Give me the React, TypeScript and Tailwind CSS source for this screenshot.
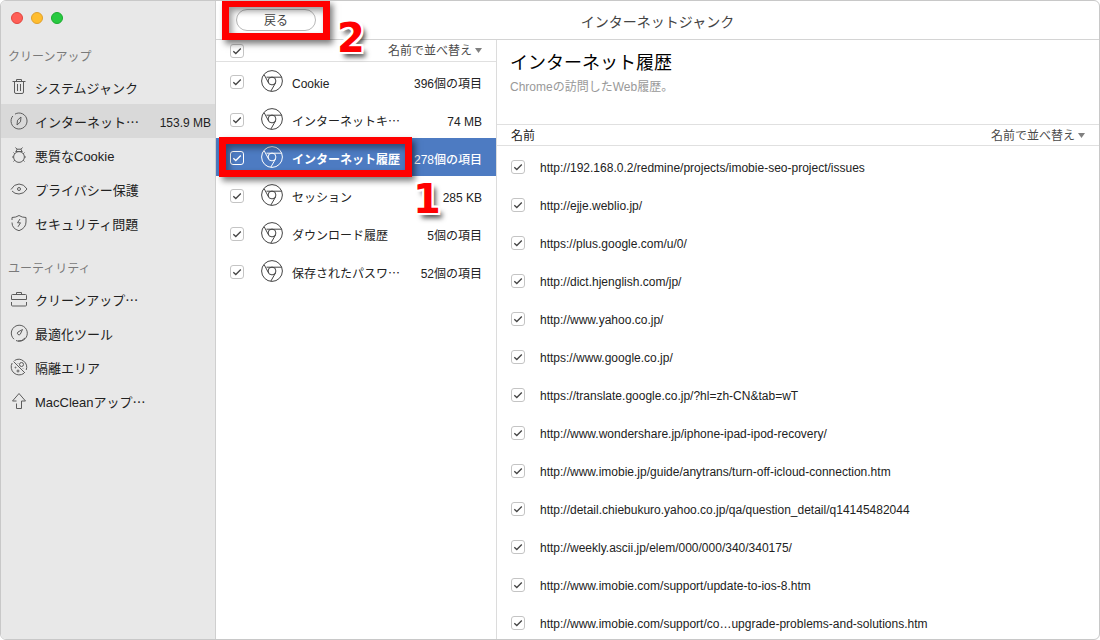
import React from "react";

type SidebarItem = { label: string; size?: string; icon: React.ReactNode; active?: boolean };

const cleanup: SidebarItem[] = [
  {
    label: "システムジャンク",
    icon: (
      <>
        <path d="M2.5 3.5h13M6.5 3.5v-2h5v2M4.5 3.5v10.5q0 1.5 1.500 1.500h6q1.500 0 1.500-1.500V3.5" />
        <path d="M7.5 6v7M10.5 6v7" />
      </>
    ),
  },
  {
    label: "インターネット…",
    size: "153.9 MB",
    active: true,
    icon: (
      <>
        <path d="M5 2.100A8 8 0 1 1 2.800 4" />
        <path d="M11 5L7.5 8.2L7 13L10.5 9.8Z" />
      </>
    ),
  },
  {
    label: "悪質なCookie",
    icon: (
      <>
        <path d="M5.500 1.500L7 3.200h4L12.500 1.500M7 3.200L5.800 6M11 3.200L12.200 6M5.800 5.500h6.400" />
        <path d="M3.500 6.500l1.300 1.300M14.500 6.500l-1.300 1.300M2 11h1.500M16 11h-1.500M3.500 15.500l1.300-1.300M14.500 15.500l-1.300-1.300" />
        <circle cx="9" cy="11" r="5.400" />
      </>
    ),
  },
  {
    label: "プライバシー保護",
    icon: (
      <>
        <path d="M1 9.500Q4 4 9 4q5 0 8 5M17 9Q14 14 9 14q-4.500 0-7-3" />
        <circle cx="9" cy="9" r="1.500" />
      </>
    ),
  },
  {
    label: "セキュリティ問題",
    icon: (
      <>
        <path d="M2 6V3.500Q6 3.500 9 1.500Q12 3.500 16 3.500V8q0 6-7 8.700Q2 14.800 2 8.500" />
        <path d="M10 5L7.500 8.800h3L8 12.800" />
      </>
    ),
  },
];

const utilities: SidebarItem[] = [
  {
    label: "クリーンアップ…",
    icon: (
      <path d="M6.500 4.500v-2h5v2M1.500 9.500v-4q0-1 1-1h13q1 0 1 1v4M1.500 9.500h15M1.500 12v3q0 1 1 1h13q1 0 1-1v-3" />
    ),
  },
  {
    label: "最適化ツール",
    icon: (
      <>
        <path d="M4 15.200A8 8 0 1 1 6 16.500M8 17a8 8 0 0 0 7-3" />
        <path d="M12.500 5.500L10.300 10.200A1.600 1.600 0 1 1 8 8Z" />
      </>
    ),
  },
  {
    label: "隔離エリア",
    icon: (
      <>
        <path d="M4.500 2.500A8 8 0 0 1 16.200 12M14 15.300A8 8 0 0 1 2.200 5M3.500 3.500l11.500 11.500" />
        <circle cx="11.500" cy="6.500" r="2" />
        <circle cx="5.500" cy="9.500" r=".5" />
        <circle cx="8" cy="13" r="1" />
        <path d="M8 5.500v.5M13 10v.5" />
      </>
    ),
  },
  {
    label: "MacCleanアップ…",
    icon: <path d="M6.500 9H2.500L9 1.500L15.500 9H11.500V16.500H6.500V11.500" />,
  },
];

const items = [
  { name: "Cookie", amount: "396個の項目" },
  { name: "インターネットキ…", amount: "74 MB" },
  { name: "インターネット履歴", amount: "278個の項目", selected: true },
  { name: "セッション", amount: "285 KB" },
  { name: "ダウンロード履歴", amount: "5個の項目" },
  { name: "保存されたパスワ…", amount: "52個の項目" },
];

const urls = [
  "http://192.168.0.2/redmine/projects/imobie-seo-project/issues",
  "http://ejje.weblio.jp/",
  "https://plus.google.com/u/0/",
  "http://dict.hjenglish.com/jp/",
  "http://www.yahoo.co.jp/",
  "https://www.google.co.jp/",
  "https://translate.google.co.jp/?hl=zh-CN&tab=wT",
  "http://www.wondershare.jp/iphone-ipad-ipod-recovery/",
  "http://www.imobie.jp/guide/anytrans/turn-off-icloud-connection.htm",
  "http://detail.chiebukuro.yahoo.co.jp/qa/question_detail/q14145482044",
  "http://weekly.ascii.jp/elem/000/000/340/340175/",
  "http://www.imobie.com/support/update-to-ios-8.htm",
  "http://www.imobie.com/support/co…upgrade-problems-and-solutions.htm",
];

// The ellipsis is set in the Japanese face so that it sits at mid height
const Label: React.FC<{ text: string }> = ({ text }) =>
  text.endsWith("…") ? (
    <>
      {text.slice(0, -1)}
      <span lang="ja" className="font-['Noto_Sans_CJK_JP',sans-serif] leading-none">…</span>
    </>
  ) : (
    <>{text}</>
  );

const Checkbox: React.FC<{ id: string; label?: string; light?: boolean }> = ({ id, label, light }) => (
  <span className="grid size-[14px] shrink-0">
    <input
      id={id}
      type="checkbox"
      defaultChecked
      aria-label={label}
      className={
        "peer col-start-1 row-start-1 size-[14px] appearance-none rounded-[3px] border " +
        (light ? "border-white" : "border-[#c4c4c4] bg-white")
      }
    />
    <svg
      viewBox="0 0 14 14"
      fill="none"
      stroke="currentColor"
      strokeWidth="1.3"
      className={
        "pointer-events-none invisible col-start-1 row-start-1 size-[14px] peer-checked:visible " +
        (light ? "text-white" : "text-[#444]")
      }
    >
      <path d="M3.300 7.200L5.800 9.500L10.800 4.500" />
    </svg>
  </span>
);

const SortSelect: React.FC<{ id: string }> = ({ id }) => (
  <label htmlFor={id} className="flex items-center gap-[3px] text-[#4a4a4a]">
    <select id={id} aria-label="並べ替え" className="w-[84px] appearance-none bg-transparent pt-px text-xs font-normal">
      <option>名前で並べ替え</option>
    </select>
    <svg viewBox="0 0 7 5" className="h-[5px] w-[7px] fill-[#808080]">
      <path d="M0 0h7L3.500 5Z" />
    </svg>
  </label>
);

const ChromeIcon: React.FC<{ light?: boolean }> = ({ light }) => (
  <svg
    viewBox="0 0 22 22"
    fill="none"
    stroke="currentColor"
    className={"size-[22px] shrink-0 " + (light ? "text-white" : "text-[#444]")}
  >
    <circle cx="11" cy="11" r="10.400" />
    <circle cx="11" cy="11" r="3.900" />
    <path d="M5.500 7.200H20.500M3.200 4.800L7.600 13M14.600 12.800L9.800 21.200" />
  </svg>
);

const SidebarGroup: React.FC<{ title: string; entries: SidebarItem[] }> = ({ title, entries }) => (
  <section>
    <h2 className="flex h-7 items-center pt-[2px] pl-[7px] text-xs text-[#7a7a7a]">{title}</h2>
    <ul>
      {entries.map(e => (
        <li key={e.label}>
          <a
            href="#"
            className={
              "flex h-[34px] items-center pr-1 pl-[9px] text-[13px] text-[#222] " + (e.active ? "bg-[#d9d9d9]" : "")
            }
          >
            <svg viewBox="0 0 18 18" fill="none" stroke="#5c5c5c" className="mr-[7px] size-[18px] shrink-0">
              {e.icon}
            </svg>
            <span className="pt-1"><Label text={e.label} /></span>
            {e.size && <span className="ml-auto pt-1 text-xs">{e.size}</span>}
          </a>
        </li>
      ))}
    </ul>
  </section>
);

// Tutorial call-outs drawn over the window
const frame =
  "pointer-events-none absolute z-10 border-[7px] border-[#f00] shadow-[3px_4px_6px_rgba(0,0,0,0.5),inset_3px_4px_6px_rgba(0,0,0,0.4)]";
const stepNumber =
  "pointer-events-none absolute z-20 font-['DejaVu_Sans',sans-serif] text-[40px] leading-[40px] font-bold text-[#f00] [text-shadow:2px_0_white,-2px_0_white,0_2px_white,0_-2px_white,2px_2px_white,-2px_2px_white,2px_-2px_white,-2px_-2px_white,4px_5px_5px_rgba(0,0,0,0.7)]";

const App: React.FC = () => (
  <div className="flex h-screen overflow-hidden rounded-md border border-[#c8c8c8] bg-white font-['Liberation_Sans','Noto_Sans_CJK_JP',sans-serif] text-xs text-[#222]">
    <aside className="w-[215px] shrink-0 border-r border-[#cfcfcf] bg-[#e8e8e8]">
      <div className="mb-[18px] flex gap-2 pt-[11px] pl-[10px]">
        <button aria-label="閉じる" className="size-3 rounded-full border border-[#e2453e] bg-[#ff5f57]" />
        <button aria-label="しまう" className="size-3 rounded-full border border-[#e0a02c] bg-[#ffbd2e]" />
        <button aria-label="拡大" className="size-3 rounded-full border border-[#1bab2f] bg-[#28ca41]" />
      </div>
      <nav className="flex flex-col gap-[14px]">
        <SidebarGroup title="クリーンアップ" entries={cleanup} />
        <SidebarGroup title="ユーティリティ" entries={utilities} />
      </nav>
    </aside>

    <div className="flex min-w-0 flex-1 flex-col">
      <header className="grid h-[39px] shrink-0 grid-cols-[1fr_auto_1fr] items-center border-b border-[#d4d4d4]">
        <div className="relative ml-5 w-20">
          <button className="block h-[22px] w-20 rounded-full border border-[#b8b8b8] bg-white pt-px text-xs text-[#444]">
            戻る
          </button>
          <div className={frame + " -inset-x-[14px] -inset-y-[9px]"} />
          <span className={stepNumber + " top-[9px] left-[101px]"}>2</span>
        </div>
        <h1 className="pt-[3px] text-sm text-[#444]">インターネットジャンク</h1>
      </header>

      <div className="flex min-h-0 flex-1">
        <section className="w-[281px] shrink-0 border-r border-[#dcdcdc]">
          <div className="flex h-[22px] items-center justify-between border-b border-[#e0e0e0] px-[14px]">
            <Checkbox id="all" label="すべて選択" />
            <SortSelect id="sort-items" />
          </div>
          <ul>
            {items.map((item, i) => (
              <li
                key={item.name}
                className={
                  "relative flex h-[38px] items-center px-[14px] " + (item.selected ? "bg-[#4d7bc2] text-white" : "")
                }
              >
                <span className="pt-[2px]">
                  <Checkbox id={`item-${i}`} light={item.selected} />
                </span>
                <label htmlFor={`item-${i}`} className="flex flex-1 items-center pl-[17px]">
                  <ChromeIcon light={item.selected} />
                  <span className={"flex-1 pt-[5px] pl-[9px] " + (item.selected ? "font-bold" : "")}>
                    <Label text={item.name} />
                  </span>
                  <span className={"pt-[5px] " + (item.selected ? "font-medium" : "")}>{item.amount}</span>
                </label>
                {item.selected && (
                  <>
                    <div className={frame + " -top-px right-[84px] -bottom-px left-[3px]"} />
                    <span className={stepNumber + " top-[41px] left-[197px]"}>1</span>
                  </>
                )}
              </li>
            ))}
          </ul>
        </section>

        <main className="min-w-0 flex-1 overflow-hidden">
          <div className="h-[85px] border-b border-[#e0e0e0] pt-[11px] pl-[13px]">
            <h2 className="text-lg leading-6 text-black">インターネット履歴</h2>
            <p className="pt-[2px] text-xs leading-5 text-[#999]">Chromeの訪問したWeb履歴。</p>
          </div>
          <table className="w-full border-separate border-spacing-0">
            <thead>
              <tr>
                <th colSpan={2} className="h-[21px] border-b border-[#e0e0e0] p-0 px-[14px]">
                  <div className="flex items-center justify-between font-normal">
                    <span className="pt-px">名前</span>
                    <SortSelect id="sort-urls" />
                  </div>
                </th>
              </tr>
            </thead>
            <tbody className="before:block before:h-[2px]">
              {urls.map((url, i) => (
                <tr key={url}>
                  <td className="h-[38px] w-[43px] p-0 pl-[14px]">
                    <Checkbox id={`url-${i}`} />
                  </td>
                  <td className="p-0 pt-px">
                    <label htmlFor={`url-${i}`}>{url}</label>
                  </td>
                </tr>
              ))}
            </tbody>
          </table>
        </main>
      </div>
    </div>
  </div>
);

export default App;
